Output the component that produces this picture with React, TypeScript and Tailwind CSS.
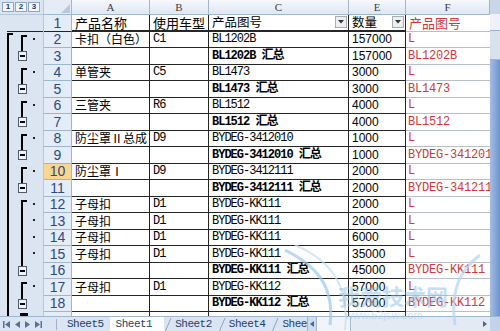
type Kind = 'none' | 'start' | 'mid' | 'sum';

interface SheetRow {
  n: number;
  a?: string;
  b?: string;
  c?: string;
  e?: string;
  f?: string;
  bold?: boolean;
  kind: Kind;
}

const rows: SheetRow[] = [
  { n: 2, a: '卡扣（白色）', b: 'C1', c: 'BL1202B', e: '157000', f: 'L', kind: 'start' },
  { n: 3, c: 'BL1202B 汇总', e: '157000', f: 'BL1202B', bold: true, kind: 'sum' },
  { n: 4, a: '单管夹', b: 'C5', c: 'BL1473', e: '3000', f: 'L', kind: 'start' },
  { n: 5, c: 'BL1473 汇总', e: '3000', f: 'BL1473', bold: true, kind: 'sum' },
  { n: 6, a: '三管夹', b: 'R6', c: 'BL1512', e: '4000', f: 'L', kind: 'start' },
  { n: 7, c: 'BL1512 汇总', e: '4000', f: 'BL1512', bold: true, kind: 'sum' },
  { n: 8, a: '防尘罩Ⅱ总成', b: 'D9', c: 'BYDEG-3412010', e: '1000', f: 'L', kind: 'start' },
  { n: 9, c: 'BYDEG-3412010 汇总', e: '1000', f: 'BYDEG-3412010', bold: true, kind: 'sum' },
  { n: 10, a: '防尘罩Ⅰ', b: 'D9', c: 'BYDEG-3412111', e: '2000', f: 'L', kind: 'start' },
  { n: 11, c: 'BYDEG-3412111 汇总', e: '2000', f: 'BYDEG-3412111', bold: true, kind: 'sum' },
  { n: 12, a: '子母扣', b: 'D1', c: 'BYDEG-KK111', e: '2000', f: 'L', kind: 'start' },
  { n: 13, a: '子母扣', b: 'D1', c: 'BYDEG-KK111', e: '2000', f: 'L', kind: 'mid' },
  { n: 14, a: '子母扣', b: 'D1', c: 'BYDEG-KK111', e: '6000', f: 'L', kind: 'mid' },
  { n: 15, a: '子母扣', b: 'D1', c: 'BYDEG-KK111', e: '35000', f: 'L', kind: 'mid' },
  { n: 16, c: 'BYDEG-KK111 汇总', e: '45000', f: 'BYDEG-KK111', bold: true, kind: 'sum' },
  { n: 17, a: '子母扣', b: 'D1', c: 'BYDEG-KK112', e: '57000', f: 'L', kind: 'start' },
  { n: 18, c: 'BYDEG-KK112 汇总', e: '57000', f: 'BYDEG-KK112', bold: true, kind: 'sum' },
];

const cjk = "font-['Noto_Sans_CJK_SC',sans-serif]";
const mono = "font-['Liberation_Mono','Noto_Sans_CJK_SC',monospace] tracking-[-1px]";
const cell = 'flex h-full items-center overflow-hidden whitespace-nowrap border-b border-r border-[#262626] pl-[3px] leading-none';
const headCell = 'flex h-full items-center whitespace-nowrap border-b-2 border-r border-[#262626] pl-[3px] leading-none';

function Outline({ kind, first }: { kind: Kind; first?: boolean }) {
  return (
    <div className="relative h-full w-[44px] shrink-0 border-r border-[#b7c8de] bg-[#dbe5f2]">
      {kind !== 'none' && (
        <div className={`absolute left-[7px] bottom-0 w-[2px] bg-black ${first ? 'top-[1px]' : 'top-0'}`} />
      )}
      {first && <div className="absolute left-[7px] top-[1px] h-[2px] w-[6px] bg-black" />}
      {kind === 'start' && (
        <>
          <div className="absolute left-[21px] top-[3px] bottom-0 w-[2px] bg-black" />
          <div className="absolute left-[21px] top-[3px] h-[2px] w-[6px] bg-black" />
        </>
      )}
      {kind === 'mid' && <div className="absolute left-[21px] top-0 bottom-0 w-[2px] bg-black" />}
      {kind === 'sum' && (
        <>
          <div className="absolute left-[21px] top-0 h-[3px] w-[2px] bg-black" />
          <div className="absolute left-[18px] top-[3px] flex h-[10px] w-[9px] items-center justify-center border border-[#505a6a] bg-[#eef3fa]">
            <div className="h-[2px] w-[5px] bg-black" />
          </div>
        </>
      )}
      {(kind === 'start' || kind === 'mid') && (
        <div className="absolute left-[33px] top-[6px] h-[2px] w-[2px] bg-[#222]" />
      )}
    </div>
  );
}

function RowHead({ n }: { n: number }) {
  const bg = n === 10 ? 'bg-[#f8d590]' : 'bg-[#e4ecf7]';
  return (
    <div
      className={`flex h-full w-[28px] shrink-0 items-center justify-center border-b border-r border-[#9eb6ce] ${bg} font-['Liberation_Sans',sans-serif] text-[14px] leading-none text-[#2c4a86]`}
    >
      {n}
    </div>
  );
}

function FilterBtn() {
  return (
    <div className="ml-auto mr-[1px] flex h-[12px] w-[12px] shrink-0 items-center justify-center border border-[#a7adb6] bg-[#eceef2]">
      <svg width="6" height="4" viewBox="0 0 6 4">
        <path d="M0 0h6L3 3.5z" fill="#333" />
      </svg>
    </div>
  );
}

function VScroll() {
  return (
    <div className="flex h-full w-[10px] shrink-0 flex-col bg-[#7f9fd4]">
      <div className="h-[14px] bg-[#c9d6ea]" />
      <div className="h-[16px] bg-[#eef2f8]" />
      <div className="h-[30px] border-y border-[#9fb2cf] bg-[#d9e1ec]" />
      <div className="flex-1 bg-gradient-to-r from-[#a7bde2] to-[#6f93cf]" />
    </div>
  );
}

function Slash() {
  return (
    <svg width="8" height="15" viewBox="0 0 8 15" className="shrink-0">
      <path d="M1 15L7 1" stroke="#8ea3c3" strokeWidth="1" />
    </svg>
  );
}

function TabBar() {
  const tabText = "font-['Liberation_Mono',monospace] text-[11px] leading-none tracking-[-0.5px] text-[#233e6e]";
  return (
    <div className="flex h-[15px] items-center border-t border-[#9eb6ce] bg-[#dae4f2]">
      <div className="flex w-[56px] items-center gap-[5px] pl-[3px] text-[#5b7099]">
        <svg width="7" height="7" viewBox="0 0 7 7"><path d="M0 0h1.5v7H0zM7 0v7L2 3.5z" fill="currentColor" /></svg>
        <svg width="5" height="7" viewBox="0 0 5 7"><path d="M5 0v7L0 3.5z" fill="currentColor" /></svg>
        <svg width="5" height="7" viewBox="0 0 5 7"><path d="M0 0v7l5-3.5z" fill="currentColor" /></svg>
        <svg width="7" height="7" viewBox="0 0 7 7"><path d="M0 0v7l5-3.5zM5.5 0H7v7H5.5z" fill="currentColor" /></svg>
      </div>
      <div className="h-[11px] w-[1px] bg-[#9fb3d0]" />
      <div className={`flex h-full items-center pl-[10px] pr-[6px] ${tabText}`}>Sheet5</div>
      <div className={`flex h-full items-center bg-white pl-[6px] pr-[12px] ${tabText}`}>Sheet1</div>
      <Slash />
      <div className={`flex h-full items-center pl-[3px] pr-[6px] ${tabText}`}>Sheet2</div>
      <Slash />
      <div className={`flex h-full items-center pl-[3px] pr-[6px] ${tabText}`}>Sheet4</div>
      <Slash />
      <div className={`flex h-full w-[28px] items-center overflow-hidden pl-[3px] ${tabText}`}>Sheet3</div>
      <div className="flex h-full flex-1 items-center bg-[#e3eaf4]">
        <div className="flex h-full w-[10px] items-center justify-center border-x border-[#9fb3d0] bg-[#cfdcef] text-[#4a6596]">
          <svg width="4" height="6" viewBox="0 0 4 6"><path d="M4 0v6L0 3z" fill="currentColor" /></svg>
        </div>
        <div className="h-full w-[34px] border-r border-[#a9bad4] bg-[#f1f4f9]" />
        <div className="flex-1" />
        <div className="flex h-full w-[10px] items-center justify-center text-[#4a6596]">
          <svg width="4" height="6" viewBox="0 0 4 6"><path d="M0 0v6l4-3z" fill="currentColor" /></svg>
        </div>
        <div className="h-full w-[10px] bg-[#c3d2e9]" />
      </div>
    </div>
  );
}

export default function App() {
  return (
    <div className="relative h-[331px] w-[500px] overflow-hidden bg-white text-black">
      <div className="flex h-[316px]">
        <div className="flex min-w-0 flex-1 flex-col overflow-hidden">
          {/* column headers */}
          <div className="flex h-[15px] shrink-0">
            <div className="flex h-full w-[44px] shrink-0 gap-[1px] border-r border-b border-[#b7c8de] bg-[#dbe5f2] pl-[2px] pt-[2px]">
              {['1', '2', '3'].map((l) => (
                <div
                  key={l}
                  className="flex h-[10px] w-[12px] items-center justify-center border border-[#8fa6c6] bg-[#f3f6fb] font-['Liberation_Sans',sans-serif] text-[8px] font-bold leading-none text-[#1f3d73]"
                >
                  {l}
                </div>
              ))}
            </div>
            <div className="relative h-full w-[28px] shrink-0 border-b border-r border-[#9eb6ce] bg-[#e4ecf7]">
              <svg width="9" height="9" viewBox="0 0 9 9" className="absolute bottom-[1px] right-[1px]">
                <path d="M9 0v9H0z" fill="#b9c8dc" />
              </svg>
            </div>
            {[
              ['A', 'w-[78px]'],
              ['B', 'w-[59px]'],
              ['C', 'w-[140px]'],
              ['E', 'w-[57px]'],
              ['F', 'w-[84px]'],
            ].map(([l, w]) => (
              <div
                key={l}
                className={`flex h-full ${w} shrink-0 items-center justify-center border-b border-r border-[#9eb6ce] bg-gradient-to-b from-[#f6f8fc] to-[#dfe7f3] font-['Liberation_Serif',serif] text-[11px] leading-none text-[#3d3d3d]`}
              >
                {l}
              </div>
            ))}
          </div>

          {/* row 1 */}
          <div className="flex h-[16.5px] shrink-0">
            <div className="relative h-full w-[44px] shrink-0 border-r border-[#b7c8de] bg-[#dbe5f2]">
              <div className="absolute bottom-0 left-[7px] right-0 h-[1px] bg-[#222]" />
            </div>
            <div className="flex h-full w-[28px] shrink-0 items-center justify-center border-b border-r border-b-[#222] border-r-[#9eb6ce] bg-[#e4ecf7] font-['Liberation_Sans',sans-serif] text-[14px] leading-none text-[#2c4a86]">
              1
            </div>
            <div className={`${headCell} w-[78px] ${cjk} text-[13px]`}>产品名称</div>
            <div className={`${headCell} w-[59px] ${cjk} text-[13px]`}>使用车型</div>
            <div className={`${headCell} w-[140px] ${cjk} text-[12.5px]`}>
              产品图号
              <FilterBtn />
            </div>
            <div className={`${headCell} w-[57px] ${cjk} text-[12.5px]`}>
              数量
              <FilterBtn />
            </div>
            <div
              className={`flex h-full w-[84px] items-center whitespace-nowrap border-b border-[#b9bfc9] pl-[3px] leading-none ${cjk} text-[13px] text-[#cf3a3a]`}
            >
              产品图号
            </div>
          </div>

          {rows.map((r) => (
            <div key={r.n} className="flex h-[16.5px] shrink-0">
              <Outline kind={r.kind} first={r.n === 2} />
              <RowHead n={r.n} />
              <div className={`${cell} w-[78px] ${cjk} text-[12px]`}>{r.a}</div>
              <div className={`${cell} w-[59px] ${mono} text-[12px]`}>{r.b}</div>
              <div className={`${cell} w-[140px] ${mono} text-[12px] ${r.bold ? 'font-bold' : ''}`}>{r.c}</div>
              <div className={`${cell} w-[57px] font-['Liberation_Sans',sans-serif] text-[12px]`}>{r.e}</div>
              <div
                className={`flex h-full w-[84px] items-center overflow-hidden whitespace-nowrap border-b border-[#b9bfc9] pl-[2px] font-['Liberation_Mono',monospace] text-[12px] leading-none tracking-[-0.2px] text-[#cf3a3a]`}
              >
                {r.f}
              </div>
            </div>
          ))}

          {/* partial row 19 */}
          <div className="flex flex-1">
            <div className="relative h-full w-[44px] shrink-0 border-r border-[#b7c8de] bg-[#dbe5f2]">
              <div className="absolute left-[7px] top-0 bottom-0 w-[2px] bg-black" />
              <div className="absolute left-[20px] top-[1px] h-[3px] w-[8px] bg-black" />
            </div>
            <div className="h-full w-[28px] shrink-0 border-r border-[#9eb6ce] bg-[#e4ecf7]" />
            <div className="h-full w-[78px] border-r border-[#262626]" />
            <div className="h-full w-[59px] border-r border-[#262626]" />
            <div className="h-full w-[140px] border-r border-[#262626]" />
            <div className="h-full w-[57px] border-r border-[#262626]" />
          </div>
        </div>
        <VScroll />
      </div>
      <TabBar />

      {/* watermark */}
      <svg width="220" height="90" viewBox="0 0 220 90" className="pointer-events-none absolute left-[275px] top-[245px] opacity-70">
        <path d="M10 5 C 40 20, 60 40, 55 80" stroke="#9cc8ee" strokeWidth="3" fill="none" />
        <path d="M20 0 C 55 15, 75 40, 70 85" stroke="#c3def5" strokeWidth="2" fill="none" />
        <path d="M205 10 C 185 25, 175 45, 180 80" stroke="#b5d6f2" strokeWidth="3" fill="none" />
      </svg>
      <div className="pointer-events-none absolute left-[338px] top-[284px] font-['Noto_Sans_CJK_SC',sans-serif] text-[22px] font-bold leading-none text-[#8fbde8] opacity-50">
        我爱技术网
      </div>
      <div className="pointer-events-none absolute left-[345px] top-[310px] font-['Liberation_Sans',sans-serif] text-[11px] leading-none text-[#8fbde8] opacity-40">
        www.52jsw.com
      </div>
    </div>
  );
}
